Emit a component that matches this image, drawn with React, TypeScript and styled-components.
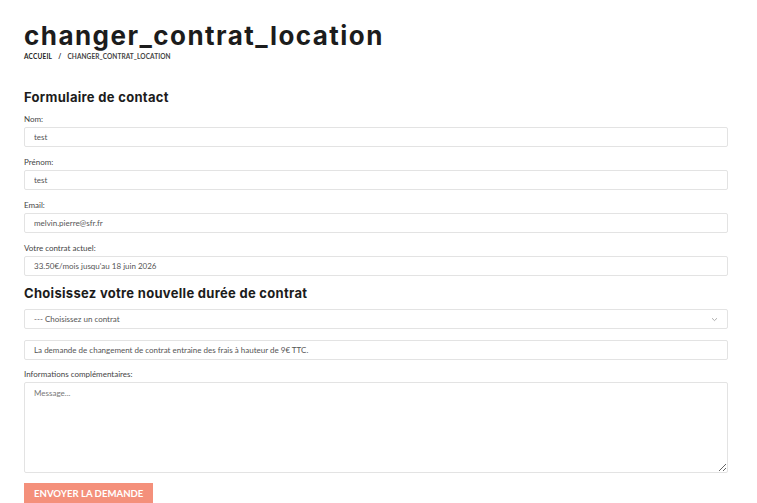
import React from "react"
import styled, { createGlobalStyle } from "styled-components"

const GlobalStyle = createGlobalStyle`
    html, body {
        margin: 0;
        padding: 0;
        background: #ffffff;
    }
    body {
        font-family: "Lato", "Liberation Sans", sans-serif;
        color: #333;
    }
`

const Page = styled.div`
    display: flex;
    flex-direction: column;
    padding: 19px 29px 0 24px;
`

const Title = styled.h1`
    margin: 0;
    font-family: "Inter", "Noto Sans", sans-serif;
    font-weight: 700;
    font-size: 26px;
    line-height: 34px;
    letter-spacing: 1.45px;
    color: #1c1c1c;
`

const Breadcrumb = styled.div`
    display: flex;
    gap: 6px;
    font-family: "Lato", sans-serif;
    font-size: 6.5px;
    line-height: 8px;
    text-transform: uppercase;
`

const Crumb = styled.span<{ $current?: boolean }>`
    color: ${(p) => (p.$current ? "#444" : "#222")};
    font-weight: 700;
    letter-spacing: ${(p) => (p.$current ? "0.1px" : "0.2px")};
`

const SectionTitle = styled.h2<{ $top: number }>`
    margin: ${(p) => p.$top}px 0 7px;
    font-family: "Inter", "Noto Sans", sans-serif;
    font-weight: 700;
    font-size: 13px;
    line-height: 18px;
    color: #1c1c1c;
    letter-spacing: 0.3px;
`

const Field = styled.div`
    display: flex;
    flex-direction: column;
`

const Label = styled.label`
    font-size: 8px;
    line-height: 12px;
    color: #444;
    margin-bottom: 2px;
`

const TextInput = styled.input`
    box-sizing: border-box;
    height: 20px;
    width: 100%;
    margin-bottom: 9px;
    padding: 0 9px;
    border: 1px solid #e3e3e3;
    border-radius: 2px;
    background: #fff;
    font-family: "Lato", sans-serif;
    font-size: 8px;
    color: #555;
    outline: none;
`

const SelectBox = styled.div`
    box-sizing: border-box;
    height: 20px;
    display: flex;
    align-items: center;
    justify-content: space-between;
    padding: 0 9px;
    margin-bottom: 11px;
    border: 1px solid #e3e3e3;
    border-radius: 2px;
    font-size: 8px;
    color: #555;
`

const Note = styled.div`
    box-sizing: border-box;
    height: 20px;
    display: flex;
    align-items: center;
    padding: 0 9px;
    margin-bottom: 8px;
    border: 1px solid #e3e3e3;
    border-radius: 2px;
    font-size: 8px;
    color: #555;
`

const TextArea = styled.textarea`
    box-sizing: border-box;
    height: 91px;
    width: 100%;
    padding: 5px 9px;
    border: 1px solid #e3e3e3;
    border-radius: 2px;
    font-family: "Lato", sans-serif;
    font-size: 8px;
    color: #555;
    resize: both;
    outline: none;
    &::placeholder {
        color: #777;
    }
`

const SubmitButton = styled.button`
    align-self: flex-start;
    margin-top: 10px;
    height: 20px;
    padding: 0 10px;
    border: none;
    background: #f4907b;
    color: #fff;
    font-family: "Lato", sans-serif;
    font-weight: 700;
    font-size: 9.6px;
    text-transform: uppercase;
`

const Chevron = () => (
    <svg width="7" height="5" viewBox="0 0 7 5" fill="none">
        <path d="M1 1.2 L3.5 3.6 L6 1.2" stroke="#999" strokeWidth="0.8" />
    </svg>
)

const fields = [
    { label: "Nom:", value: "test" },
    { label: "Prénom:", value: "test" },
    { label: "Email:", value: "melvin.pierre@sfr.fr" },
    { label: "Votre contrat actuel:", value: "33.50€/mois jusqu'au 18 juin 2026" },
]

const App: React.FC = () =>
{
    return (
        <>
            <GlobalStyle />
            <Page>
                <Title>changer_contrat_location</Title>
                <Breadcrumb>
                    <Crumb>Accueil</Crumb>
                    <Crumb>/</Crumb>
                    <Crumb $current>changer_contrat_location</Crumb>
                </Breadcrumb>
                <SectionTitle $top={27}>Formulaire de contact</SectionTitle>
                {fields.map((f) => (
                    <Field key={f.label}>
                        <Label>{f.label}</Label>
                        <TextInput readOnly defaultValue={f.value} />
                    </Field>
                ))}
                <SectionTitle $top={-1}>Choisissez votre nouvelle durée de contrat</SectionTitle>
                <SelectBox>
                    <span>--- Choisissez un contrat</span>
                    <Chevron />
                </SelectBox>
                <Note>La demande de changement de contrat entraine des frais à hauteur de 9€ TTC.</Note>
                <Field>
                    <Label>Informations complémentaires:</Label>
                    <TextArea placeholder="Message..." />
                </Field>
                <SubmitButton>Envoyer la demande</SubmitButton>
            </Page>
        </>
    )
}

export default App
